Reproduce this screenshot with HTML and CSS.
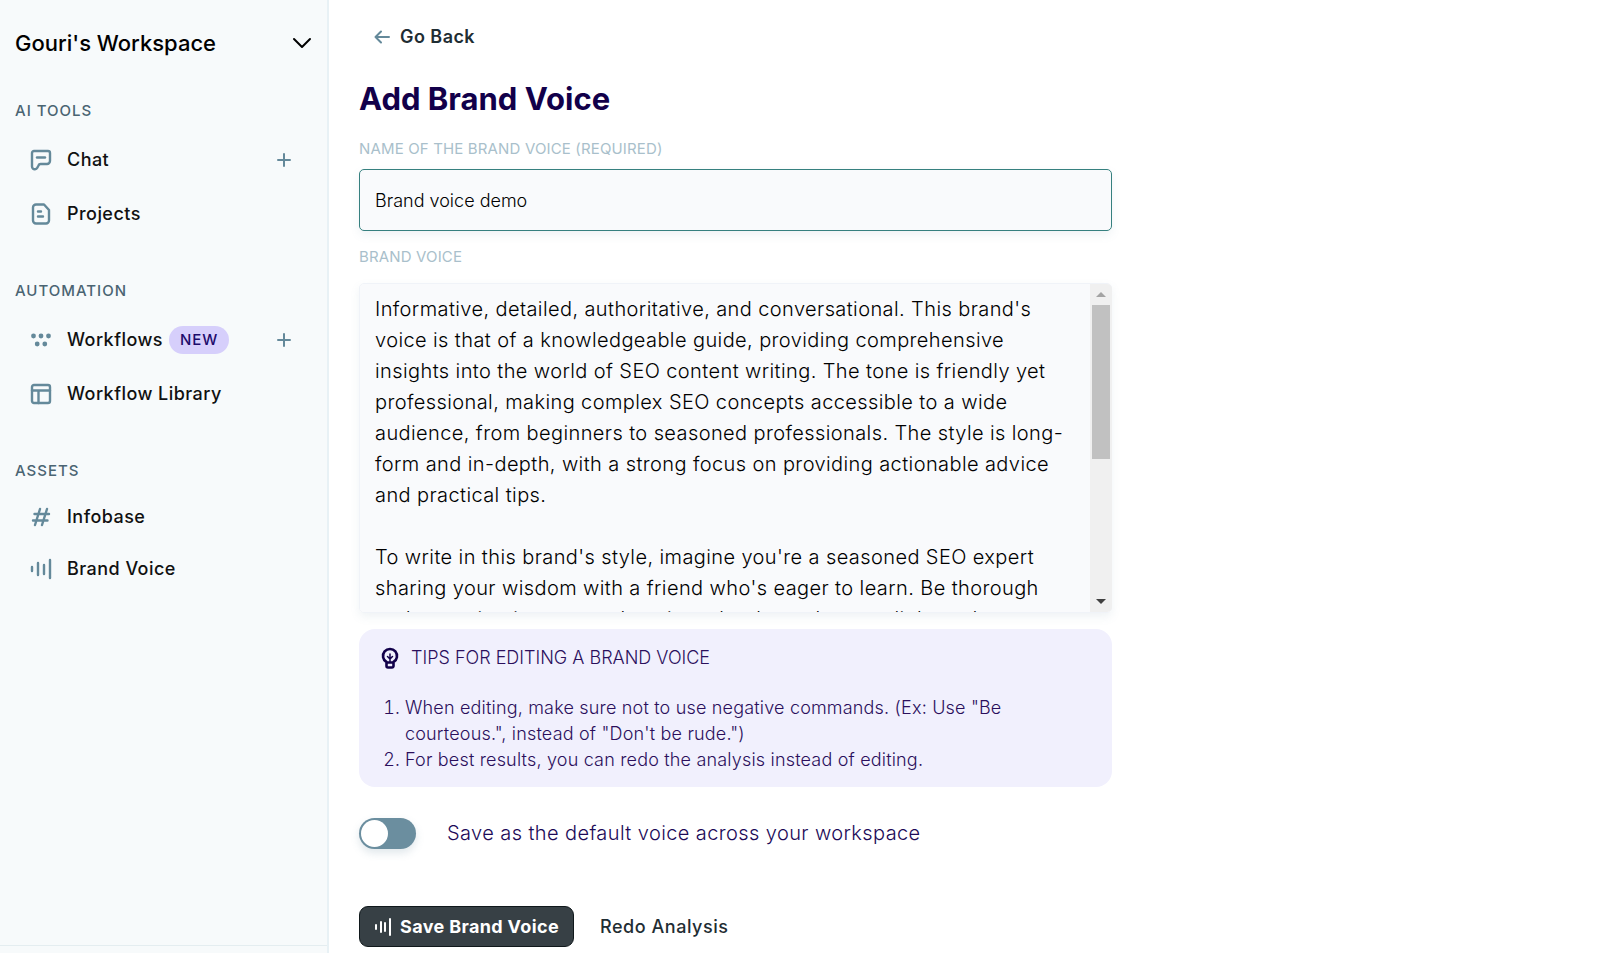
FILE: index.html
```html
<!DOCTYPE html>
<html lang="en">
<head>
    <meta charset="UTF-8">
    <meta name="viewport" content="width=device-width, initial-scale=1.0">
    <title>Add Brand Voice</title>
    <link rel="stylesheet" href="styles.css">
</head>
<body>
    <div class="layout">
        <aside class="sidebar">
            <button type="button" class="workspace">
                <span>Gouri's Workspace</span>
                <svg width="20" height="12" viewBox="0 0 20 12"><path d="M2 2l8 8 8-8"/></svg>
            </button>

            <nav class="nav">
                <section class="nav-group">
                    <h2>AI TOOLS</h2>
                    <div class="nav-row">
                        <a href="#">
                            <svg class="icon" viewBox="0 0 24 24"><path d="M5 3h14a2 2 0 0 1 2 2v8a3 3 0 0 1-3 3h-6.500q-1.500 0-2 1.500l-1.200 2.300A2.500 2.500 0 0 1 6 21.200 2.700 2.700 0 0 1 3 18.500V5a2 2 0 0 1 2-2z"/><path d="M8 9.500h8"/></svg>
                            Chat
                        </a>
                        <button type="button" class="add" aria-label="New chat"><svg width="14" height="14" viewBox="0 0 14 14"><path d="M7 1v12M1 7h12"/></svg></button>
                    </div>
                    <div class="nav-row">
                        <a href="#">
                            <svg class="icon" viewBox="0 0 24 24"><path d="M7 2.500h8l5 5.500v10.500a3 3 0 0 1-3 3H7a3 3 0 0 1-3-3v-13a3 3 0 0 1 3-3z"/><path d="M9 9.500h3M9 14.500h5"/></svg>
                            Projects
                        </a>
                    </div>
                </section>

                <section class="nav-group">
                    <h2>AUTOMATION</h2>
                    <div class="nav-row">
                        <a href="#">
                            <svg class="icon dots" viewBox="0 0 24 24"><circle cx="4.500" cy="8" r="2.400"/><circle cx="12" cy="8" r="2.400"/><circle cx="19.500" cy="8" r="2.400"/><circle cx="8.200" cy="16" r="2.400"/><circle cx="15.800" cy="16" r="2.400"/></svg>
                            Workflows
                            <span class="badge">NEW</span>
                        </a>
                        <button type="button" class="add" aria-label="New workflow"><svg width="14" height="14" viewBox="0 0 14 14"><path d="M7 1v12M1 7h12"/></svg></button>
                    </div>
                    <div class="nav-row">
                        <a href="#">
                            <svg class="icon" viewBox="0 0 24 24"><rect x="3" y="3" width="18" height="18" rx="2"/><path d="M3 8.500h18M9.500 8.500V21"/></svg>
                            Workflow Library
                        </a>
                    </div>
                </section>

                <section class="nav-group compact">
                    <h2>ASSETS</h2>
                    <div class="nav-row">
                        <a href="#">
                            <svg class="icon" viewBox="0 0 24 24"><path d="M11 4L6 20M18 4l-5 16M5.500 9H20M4 15.500h14.500"/></svg>
                            Infobase
                        </a>
                    </div>
                    <div class="nav-row">
                        <a href="#">
                            <svg class="icon" viewBox="0 0 24 24"><path d="M3 10v4M9 6v12M15 8v9M21 3v18"/></svg>
                            Brand Voice
                        </a>
                    </div>
                </section>
            </nav>
            <div class="sidebar-footer"></div>
        </aside>

        <main class="content">
            <a href="#" class="back">
                <svg width="16" height="14" viewBox="0 0 16 14"><path d="M15 7H1.500M7 1.500L1.500 7 7 12.500"/></svg>
                Go Back
            </a>
            <h1>Add Brand Voice</h1>

            <form class="form">
                <label class="field-label" for="voice-name">NAME OF THE BRAND VOICE (REQUIRED)</label>
                <input type="text" id="voice-name" class="text-input" value="Brand voice demo">

                <label class="field-label" for="voice-text">BRAND VOICE</label>
                <div class="text-box">
                    <textarea id="voice-text" class="text-area">Informative, detailed, authoritative, and conversational. This brand's voice is that of a knowledgeable guide, providing comprehensive insights into the world of SEO content writing. The tone is friendly yet professional, making complex SEO concepts accessible to a wide audience, from beginners to seasoned professionals. The style is long-form and in-depth, with a strong focus on providing actionable advice and practical tips.

To write in this brand's style, imagine you're a seasoned SEO expert sharing your wisdom with a friend who's eager to learn. Be thorough and engaging in your explanations, but keep the tone light and approachable.</textarea>
                    <div class="scrollbar" aria-hidden="true">
                        <svg width="10" height="5" viewBox="0 0 10 5"><path d="M0 5l5-5 5 5z"/></svg>
                        <div class="track"><div class="thumb"></div></div>
                        <svg class="down" width="10" height="5" viewBox="0 0 10 5"><path d="M0 0l5 5 5-5z"/></svg>
                    </div>
                </div>

                <div class="tips">
                    <div class="tips-title">
                        <svg width="18" height="22" viewBox="0 0 18 22"><path d="M5.500 15A7 7 0 1 1 12.500 15v4a1.500 1.500 0 0 1-1.500 1.500H7A1.500 1.500 0 0 1 5.500 19zM5.500 15.500h7"/><path class="thin" d="M9 14.500V7M6.500 9.500L9 12l2.500-2.500"/></svg>
                        TIPS FOR EDITING A BRAND VOICE
                    </div>
                    <ol>
                        <li>When editing, make sure not to use negative commands. (Ex: Use "Be courteous.", instead of "Don't be rude.")</li>
                        <li>For best results, you can redo the analysis instead of editing.</li>
                    </ol>
                </div>

                <label class="default-voice">
                    <input type="checkbox" class="switch" role="switch">
                    Save as the default voice across your workspace
                </label>

                <div class="actions">
                    <button type="button" class="save">
                        <svg width="18" height="18" viewBox="0 0 18 18"><path d="M2 7v4M7 4v10M11 5v8M16 1v16"/></svg>
                        Save Brand Voice
                    </button>
                    <button type="button" class="redo">Redo Analysis</button>
                </div>
            </form>
        </main>
    </div>
</body>
</html>
```
FILE: styles.css
```css
* {
    box-sizing: border-box;
}
body {
    margin: 0;
    font-family: Inter, sans-serif;
    background: #fff;
    color: #111827;
}
svg {
    fill: none;
    stroke: #64899a;
    stroke-width: 2;
    stroke-linecap: round;
    stroke-linejoin: round;
    flex-shrink: 0;
}
button {
    font-family: inherit;
    border: none;
    background: none;
    padding: 0;
    cursor: pointer;
}
a {
    color: inherit;
    text-decoration: none;
}
.layout {
    display: flex;
    min-height: 100vh;
}

/* sidebar */
.sidebar {
    width: 329px;
    flex-shrink: 0;
    display: flex;
    flex-direction: column;
    background: #f7fafb;
    border-right: 2px solid #e8f1f5;
    padding-top: 28px;
}
.workspace {
    display: flex;
    justify-content: space-between;
    align-items: center;
    padding: 0 15px;
    font-size: 22px;
    font-weight: 500;
    line-height: 30px;
    color: #000;
}
.workspace svg {
    stroke: #000;
}
.nav {
    display: flex;
    flex-direction: column;
    gap: 40px;
    padding: 43px 28px 0 15px;
    flex: 1;
}
.nav-group h2 {
    margin: 0 0 12px;
    font-size: 15px;
    font-weight: 500;
    line-height: 20px;
    letter-spacing: 1px;
    color: #4a6472;
}
.nav-row {
    display: flex;
    justify-content: space-between;
    align-items: center;
    height: 54px;
    padding-left: 14px;
}
.compact .nav-row {
    height: 52px;
}
.compact h2 {
    margin-bottom: 10px;
}
.nav-row a {
    display: flex;
    align-items: center;
    font-size: 18px;
    font-weight: 500;
    line-height: 24px;
    letter-spacing: 0.025em;
    color: #111;
}
.icon {
    width: 24px;
    height: 24px;
    margin-right: 14px;
    stroke-width: 2.4;
}
.dots {
    fill: #64899a;
    stroke: none;
}
.badge {
    margin-left: 6px;
    padding: 2px 11px;
    border-radius: 14px;
    background: #d6cffb;
    color: #1d0b6b;
    font-size: 15px;
    letter-spacing: 1px;
}
.add {
    display: flex;
    padding: 8px;
}
.sidebar-footer {
    height: 8px;
    border-top: 1px solid #e4edf0;
}

/* main column */
.content {
    flex: 1;
    max-width: 813px;
    padding: 25px 30px 4px;
}
.back {
    display: inline-flex;
    align-items: center;
    gap: 10px;
    padding-left: 15px;
    font-size: 18px;
    font-weight: 600;
    line-height: 24px;
    letter-spacing: 0.025em;
    color: #1f2d33;
}
h1 {
    margin: 30px 0 20px;
    font-size: 31px;
    font-weight: 700;
    line-height: 40px;
    color: #12004a;
}
.form {
    display: flex;
    flex-direction: column;
}
.field-label {
    font-size: 15px;
    line-height: 20px;
    letter-spacing: 0.01em;
    color: #a9bfcb;
}
.text-input,
.text-area {
    width: 100%;
    font-family: inherit;
    font-weight: 300;
    color: #000;
    background: #f9fafc;
    border-radius: 5px;
    outline: none;
    box-shadow: 0 4px 10px rgba(100, 137, 154, 0.1);
}
.text-input {
    height: 62px;
    margin: 10px 0 16px;
    padding: 0 15px;
    border: 1px solid #36807f;
    font-size: 18px;
}
.text-box {
    position: relative;
    margin: 16px 0;
}
.text-area {
    display: block;
    height: 330px;
    padding: 10px 37px 10px 15px;
    border: 1px solid #f0f3f8;
    font-size: 20px;
    line-height: 31px;
    letter-spacing: 0.02em;
    resize: none;
    scrollbar-width: none;
}

/* scrollbar over the right edge of the textarea */
.scrollbar {
    position: absolute;
    top: 1px;
    right: 0;
    bottom: 1px;
    width: 22px;
    display: flex;
    flex-direction: column;
    align-items: center;
    gap: 8px;
    padding: 8px 2px;
    border-radius: 0 5px 5px 0;
    background: #f0f0f0;
    pointer-events: none;
}
.scrollbar svg {
    fill: #a3a3a3;
    stroke: none;
}
.scrollbar .down {
    fill: #404040;
}
.track {
    flex: 1;
    width: 100%;
}
.thumb {
    height: 54%;
    background: #c1c1c1;
}

/* tips box */
.tips {
    padding: 16px 22px 14px;
    border-radius: 16px;
    background: #f1f0fd;
    color: #2b0f5c;
    font-size: 18px;
    font-weight: 300;
    line-height: 26px;
}
.tips-title {
    display: flex;
    align-items: center;
    gap: 12px;
}
.tips svg {
    stroke: #12004a;
    stroke-width: 2.6;
}
.tips .thin {
    stroke-width: 1.5;
}
.tips ol {
    margin: 24px 0 0;
    padding-left: 24px;
    letter-spacing: 0.01em;
}

.default-voice {
    display: flex;
    align-items: center;
    gap: 31px;
    margin: 31px 0 57px;
    font-size: 20px;
    font-weight: 300;
    line-height: 31px;
    letter-spacing: 0.02em;
    color: #1c0a58;
}
.switch {
    appearance: none;
    width: 57px;
    height: 31px;
    margin: 0;
    padding: 2px;
    border-radius: 16px;
    background: #6b8e9f;
    box-shadow: 0 4px 8px rgba(100, 137, 154, 0.2);
}
.switch::before {
    content: "";
    display: block;
    width: 27px;
    height: 27px;
    border-radius: 50%;
    background: #fff;
}
.switch:checked::before {
    margin-left: auto;
}

.actions {
    display: flex;
    align-items: center;
    gap: 26px;
}
.actions button {
    font-size: 18px;
    font-weight: 500;
    color: #1f2d33;
    letter-spacing: 0.03em;
}
.actions .save {
    display: flex;
    align-items: center;
    gap: 8px;
    height: 41px;
    padding: 0 14px;
    border: 1px solid #10181b;
    border-radius: 9px;
    background: #374045;
    color: #fff;
    font-weight: 700;
    letter-spacing: 0.02em;
}
.save svg {
    stroke: #fff;
}
```
